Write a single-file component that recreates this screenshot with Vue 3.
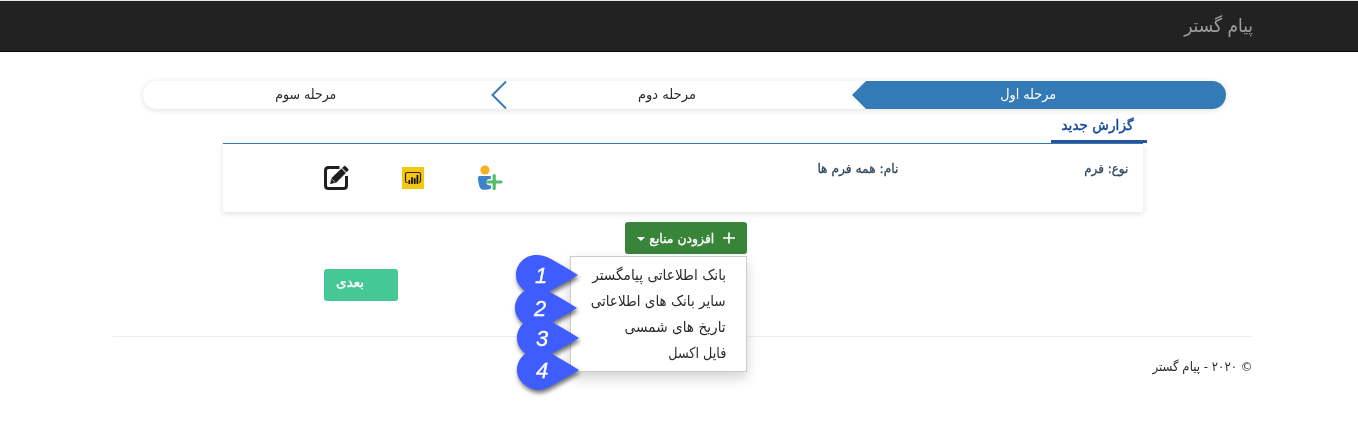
<script setup>
const steps = [
  { text: 'مرحله اول', width: 56, cls: 'first' },
  { text: 'مرحله دوم', width: 58, cls: 'second' },
  { text: 'مرحله سوم', width: 61, cls: 'third' }
]
const sources = [
  { text: 'بانک اطلاعاتی پیامگستر', width: 134 },
  { text: 'سایر بانک های اطلاعاتی', width: 135 },
  { text: 'تاریخ های شمسی', width: 101 },
  { text: 'فایل اکسل', width: 58 }
]
const markers = [
  { n: 1, x: 516, y: 255 },
  { n: 2, x: 515, y: 288 },
  { n: 3, x: 517, y: 318 },
  { n: 4, x: 517, y: 350 }
]
// Condenses a label horizontally so that it takes exactly the given width.
const vFit = {
  mounted(el, { value }) {
    const natural = el.getBoundingClientRect().width
    el.style.transform = `scaleX(${value / natural})`
    el.style.marginLeft = `${value - natural}px`
  }
}
</script>

<template>
  <div class="page" dir="rtl">
    <header class="navbar"><span v-fit="69" class="fit">پیام گستر</span></header>

    <nav class="steps">
      <div v-for="s in steps" :key="s.text" class="step" :class="s.cls">
        <span v-fit="s.width" class="fit">{{ s.text }}</span>
        <svg v-if="s.cls === 'second'" class="chevron" width="16" height="28" viewBox="0 0 16 28">
          <path d="M15 0.5 1.5 14 15 27.5" fill="none" stroke="#337ab7" stroke-width="2" />
        </svg>
      </div>
    </nav>

    <div class="tabs"><div class="tab"><span v-fit="72" class="fit">گزارش جدید</span></div></div>

    <section class="card">
      <div class="kind"><span v-fit="44" class="fit">نوع: فرم</span></div>
      <div class="name"><span v-fit="81" class="fit">نام: همه فرم ها</span></div>
      <div class="icons">
        <svg width="26" height="26" viewBox="0 0 26 26">
          <circle cx="8" cy="5" r="4.6" fill="#f9b01e" />
          <path d="M2.2 11H13.8V14.2Q9.5 13.6 9.3 17.5Q9.5 20.5 14 20.4V23.4Q11 25.2 6 24.8Q3.3 24.4 2.4 21.5Q1 17 1 13Q1 11.3 2.2 11Z" fill="#3d82ca" />
          <path d="M17.2 10.6V23.4M10.8 17H24" stroke="#52be6c" stroke-width="3.2" stroke-linecap="round" fill="none" />
        </svg>
        <svg width="22" height="22" viewBox="0 0 22 22">
          <rect width="22" height="22" fill="#f4c811" />
          <path d="M5.5 15.5H5Q3.5 15.5 3.5 14V7Q3.5 5.5 5 5.5H17Q18.5 5.5 18.5 7V14Q18.5 15.5 17 15.5" fill="none" stroke="#2b2505" stroke-width="1.2" />
          <path d="M7.3 16.2V13.8M10 16.2V11M12.7 16.2V12M15.4 16.2V8.7" stroke="#141204" stroke-width="1.8" stroke-linecap="round" />
        </svg>
        <svg width="25" height="26" viewBox="0 0 25 26">
          <path d="M15.5 2.5H4.5Q1.5 2.5 1.5 5.5V20.5Q1.5 23.5 4.5 23.5H19.5Q22.5 23.5 22.5 20.5V11" fill="none" stroke="#1f1f1f" stroke-width="3" />
          <path d="M6.3 18.8 8 12.8 17.4 3.8 21.6 8 12.4 17.2ZM18.3 2.9 20 1.4Q20.8.8 21.6 1.5L24 4Q24.7 4.8 24 5.5L22.5 7.1Z" fill="#1f1f1f" stroke="#1f1f1f" stroke-width=".5" />
          <path d="M8.3 14.4 10.7 16.9" stroke="#fff" stroke-width=".7" />
        </svg>
      </div>
    </section>

    <div class="toolbar">
      <button class="add">
        <svg width="13" height="12" viewBox="0 0 13 12"><path d="M6.5 0V12M0 6H13" stroke="#fff" stroke-width="1.8" /></svg>
        <span v-fit="65" class="fit">افزودن منابع</span>
        <i class="caret"></i>
      </button>
    </div>

    <ul class="menu">
      <li v-for="s in sources" :key="s.text"><span v-fit="s.width" class="fit">{{ s.text }}</span></li>
    </ul>

    <div class="actions"><button class="next"><span v-fit="28" class="fit">بعدی</span></button></div>

    <footer class="footer"><span v-fit="100" class="fit">© ۲۰۲۰ - پیام گستر</span></footer>

    <div class="markers" dir="ltr">
      <svg v-for="m in markers" :key="m.n" class="marker" :style="{ left: m.x + 'px', top: m.y + 'px' }" width="64" height="42" viewBox="0 0 64 42">
        <path d="M62 20C52 26 42 32 33 36.5C26 40.5 19 41 13 38C5 34 0 28 0 20C0 9 9 0 20 0C26 0 30 1.2 35 4C44 9 53 14.5 62 20Z" fill="#3f5cff" />
        <text x="25" y="28" text-anchor="middle">{{ m.n }}</text>
      </svg>
    </div>
  </div>
</template>

<style>
body { margin: 0; background: #fff; overflow: hidden; }
</style>

<style scoped>
.page {
  position: relative;
  height: 421px;
  overflow: hidden;
  font-family: "DejaVu Sans Condensed", "DejaVu Sans", sans-serif;
  font-size: 14px;
  color: #2b2b2b;
}
.fit { display: inline-block; white-space: nowrap; transform-origin: 100% 50%; }
.navbar {
  box-sizing: border-box;
  height: 52px;
  padding-right: 105px;
  border-top: 1px solid #e2e8e6;
  border-bottom: 1px solid #090909;
  background: #222;
  color: #9d9d9d;
  font-size: 19px;
  line-height: 49px;
}
.steps {
  display: flex;
  width: 1083px;
  height: 28px;
  margin: 29px 132px 0 0;
  border-radius: 14px;
  box-shadow: 0 1px 6px rgba(0, 0, 0, .13);
  line-height: 27px;
}
.step { display: flex; justify-content: flex-start; }
.first {
  box-sizing: border-box;
  width: 374px;
  padding-right: 170px;
  border-radius: 0 14px 14px 0;
  background: #337ab7;
  color: #fff;
  clip-path: polygon(14px 0, 100% 0, 100% 100%, 14px 100%, 0 50%);
}
.second { box-sizing: border-box; width: 361px; padding-right: 156px; justify-content: space-between; }
.third { padding-right: 155px; }
.chevron { display: block; }
.tabs { height: 34px; margin-right: 211px; }
.tab {
  box-sizing: border-box;
  width: 96px;
  height: 34px;
  padding: 5px 14px 0 0;
  border-bottom: 3px solid #2a569f;
  color: #10479b;
  line-height: 22px;
  -webkit-text-stroke: .4px currentColor;
}
.card {
  box-sizing: border-box;
  display: flex;
  width: 920px;
  height: 69px;
  margin-right: 215px;
  border-top: 1px solid #337ab7;
  box-shadow: 0 2px 6px rgba(0, 0, 0, .12);
  color: #34495e;
  font-size: 13px;
  line-height: 20px;
  -webkit-text-stroke: .3px currentColor;
}
.kind { width: 230px; padding: 15px 15px 0 0; box-sizing: border-box; }
.name { width: 410px; padding: 15px 15px 0 0; box-sizing: border-box; }
.icons { display: flex; align-items: center; gap: 53px; height: 68px; -webkit-text-stroke: 0; }
.toolbar { height: 47px; padding: 10px 611px 0 0; }
button { border: 0; font: inherit; color: #fff; -webkit-text-stroke: .3px currentColor; }
.add {
  display: flex;
  align-items: center;
  box-sizing: border-box;
  width: 122px;
  height: 32px;
  padding: 0 12px;
  border-radius: 3px;
  background: #388439;
  font-size: 13px;
}
.add .fit { margin-right: 9px; }
.caret { margin: 1px 4px 0 0; border: 4px solid transparent; border-top-color: #fff; border-bottom: 0; }
.menu {
  position: absolute;
  z-index: 2;
  left: 570px;
  top: 256px;
  box-sizing: border-box;
  width: 177px;
  height: 116px;
  margin: 0;
  padding: 5px 20px 0 0;
  border: 1px solid #ccc;
  background: #fff;
  box-shadow: 0 6px 12px rgba(0, 0, 0, .175);
  font-size: 15px;
  list-style: none;
}
.menu li { height: 26px; line-height: 26px; }
.actions { height: 67px; padding-right: 960px; }
.next {
  display: block;
  width: 74px;
  height: 32px;
  padding: 0 34px 7px 0;
  border-radius: 3px;
  background: #45c896;
  text-align: right;
}
.footer { width: 1140px; margin-right: 105px; border-top: 1px solid #eee; font-size: 13px; line-height: 60px; }
.markers { position: absolute; inset: 0; z-index: 3; filter: drop-shadow(1px 3px 2px rgba(0, 0, 0, .55)); }
.marker { position: absolute; overflow: visible; }
.marker text { fill: #fff; stroke: #fff; stroke-width: .3px; font: italic 22px "Liberation Sans", sans-serif; }
</style>
